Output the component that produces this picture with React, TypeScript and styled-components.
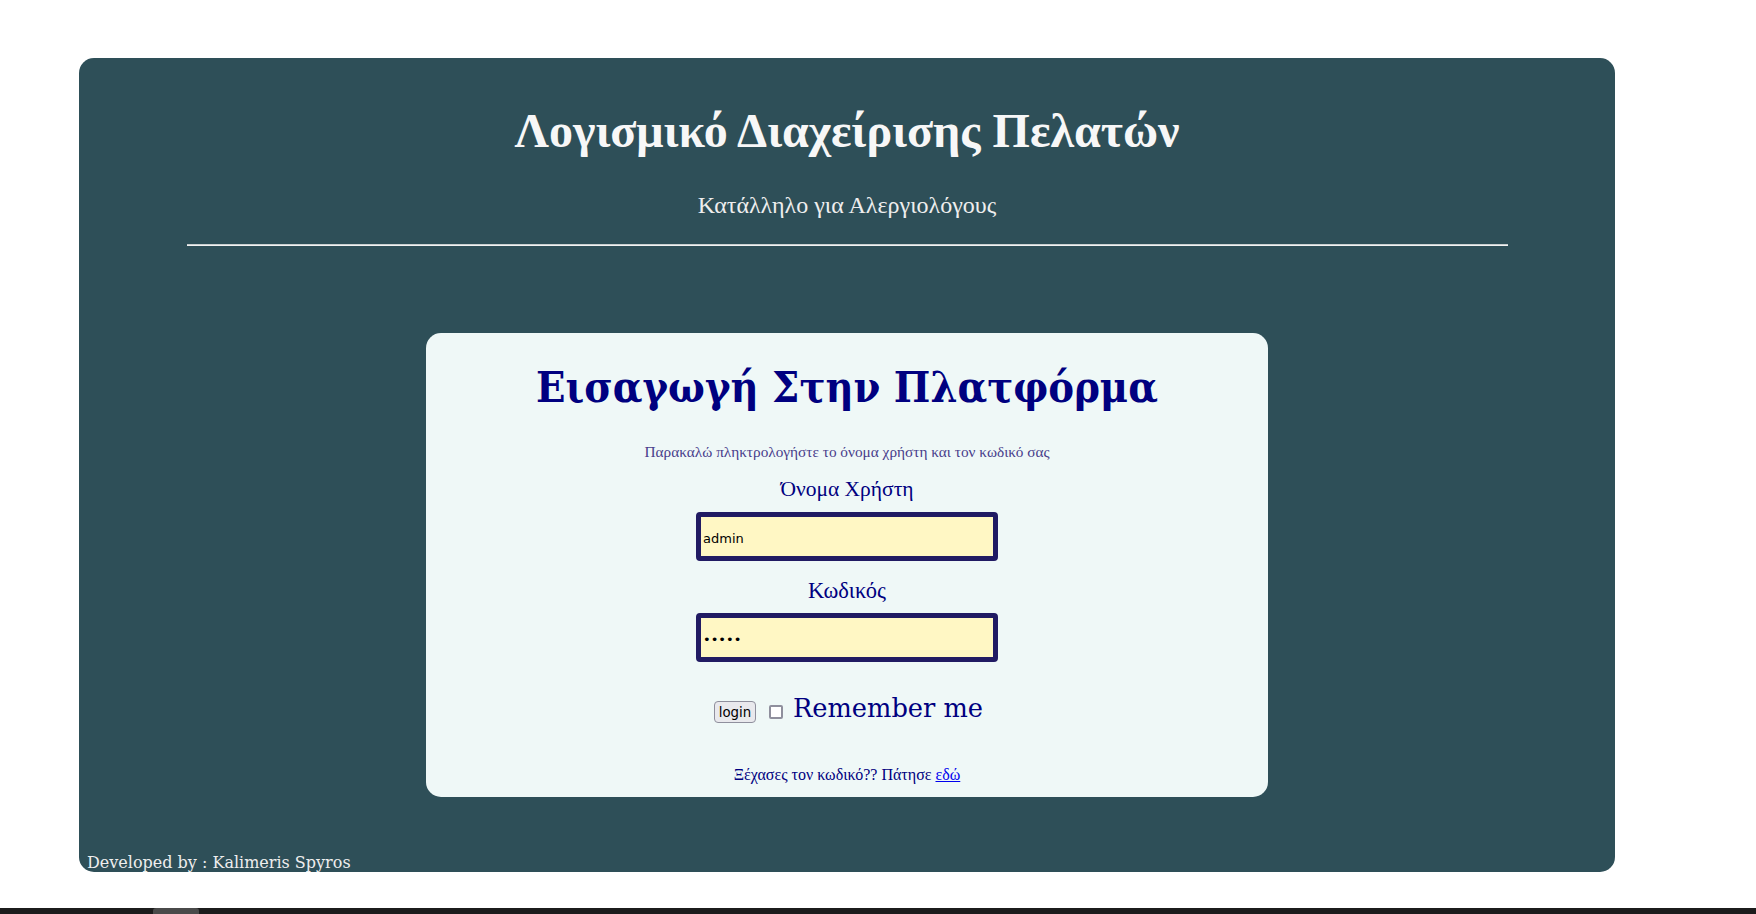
import React from "react";
import styled, { createGlobalStyle } from "styled-components";

const Global = createGlobalStyle`
  html, body { margin: 0; padding: 0; background: #ffffff; }
  body { font-family: "DejaVu Serif", serif; }
`;

const Page = styled.div`
  padding: 58px 0 0 79px;
  height: 914px;
  box-sizing: border-box;
`;

const Panel = styled.div`
  width: 1536px;
  height: 814px;
  box-sizing: border-box;
  background: #2e4f58;
  border-radius: 15px;
  padding-top: 45px;
  display: flex;
  flex-direction: column;
`;

const Header = styled.header`
  display: flex;
  flex-direction: column;
  align-items: center;
`;

const Title = styled.h1`
  margin: 0;
  font-family: "Liberation Serif", serif;
  font-weight: bold;
  font-size: 48px;
  line-height: 56px;
  color: #f7f7f7;
`;

const Subtitle = styled.p`
  margin: 32px 0 0;
  font-family: "Liberation Serif", serif;
  font-size: 24px;
  line-height: 28px;
  color: #eeeeee;
`;

const Rule = styled.hr`
  width: 1321px;
  margin: 25px 0 0 108px;
  height: 0;
  border: none;
  border-top: 1px solid #c9cfd0;
  border-bottom: 1px solid #f2f2f2;
`;

const Card = styled.section`
  margin: 87px 0 0 347px;
  width: 842px;
  height: 464px;
  box-sizing: border-box;
  background: #eff8f7;
  border-radius: 15px;
  padding-top: 29px;
  display: flex;
  flex-direction: column;
  align-items: center;
`;

const CardTitle = styled.h2`
  margin: 0;
  font-family: "DejaVu Serif Condensed", "DejaVu Serif", serif;
  font-stretch: condensed;
  font-weight: bold;
  font-size: 43px;
  line-height: 51px;
  color: #000080;
`;

const Hint = styled.p`
  margin: 30px 0 0;
  font-family: "Liberation Serif", serif;
  font-size: 15.3px;
  line-height: 18px;
  color: #483d8b;
`;

const Label = styled.label<{ $gap: number; $size: number }>`
  display: block;
  margin-top: ${(p) => p.$gap}px;
  font-family: "Liberation Serif", serif;
  font-size: ${(p) => p.$size}px;
  line-height: ${(p) => Math.round(p.$size * 1.16)}px;
  color: #000080;
`;

const Field = styled.input<{ $gap: number }>`
  margin-top: ${(p) => p.$gap}px;
  width: 302px;
  height: 49px;
  box-sizing: border-box;
  border: 5px solid #211b63;
  border-radius: 4px;
  background: #fff7c4;
  padding: 3px 2px 0;
  font-family: "DejaVu Sans", sans-serif;
  font-size: 13px;
  color: #000;
  outline: none;
`;

const Row = styled.div`
  margin-top: 31px;
  padding-left: 3px;
  display: flex;
  align-items: flex-start;
`;

const LoginButton = styled.button`
  margin-top: 8px;
  width: 42px;
  height: 22px;
  box-sizing: border-box;
  padding: 0;
  border: 1px solid #8f8f9d;
  border-radius: 4px;
  background: #e9e9ed;
  font-family: "DejaVu Sans", sans-serif;
  font-size: 13.33px;
  color: #000;
`;

const Check = styled.input`
  appearance: none;
  margin: 12px 0 0 13px;
  width: 14px;
  height: 14px;
  box-sizing: border-box;
  border: 2px solid #8f8f9d;
  border-radius: 2px;
  background: #ffffff;
`;

const Remember = styled.span`
  margin-left: 10px;
  font-family: "DejaVu Serif", serif;
  font-size: 25.7px;
  line-height: 30px;
  color: #000080;
`;

const Forgot = styled.p`
  margin: 42px 0 0;
  font-family: "Liberation Serif", serif;
  font-size: 16px;
  line-height: 19px;
  color: #000080;
`;

const Link = styled.a`
  color: #0000ee;
  text-decoration: underline;
`;

const Footer = styled.footer`
  margin-top: auto;
  padding-left: 8px;
  font-family: "DejaVu Serif", serif;
  font-size: 16px;
  line-height: 19px;
  color: #eeeeee;
`;

const ScrollTrack = styled.div`
  position: fixed;
  left: 0;
  right: 0;
  bottom: 0;
  height: 6px;
  background: #1c1c1c;
`;

const ScrollThumb = styled.div`
  margin-left: 153px;
  width: 46px;
  height: 6px;
  border-radius: 3px 3px 0 0;
  background: #4a4a4a;
`;

export default function App() {
  return (
    <>
      <Global />
      <Page>
        <Panel>
          <Header>
            <Title>Λογισμικό Διαχείρισης Πελατών</Title>
            <Subtitle>Κατάλληλο για Αλεργιολόγους</Subtitle>
          </Header>
          <Rule />
          <Card>
            <CardTitle>Εισαγωγή Στην Πλατφόρμα</CardTitle>
            <Hint>Παρακαλώ πληκτρολογήστε το όνομα χρήστη και τον κωδικό σας</Hint>
            <Label $gap={16} $size={21.5}>Όνομα Χρήστη</Label>
            <Field $gap={10} type="text" defaultValue="admin" readOnly />
            <Label $gap={17} $size={22.5}>Κωδικός</Label>
            <Field $gap={9} type="password" defaultValue="admin" readOnly />
            <Row>
              <LoginButton type="button">login</LoginButton>
              <Check type="checkbox" />
              <Remember>Remember me</Remember>
            </Row>
            <Forgot>
              Ξέχασες τον κωδικό?? Πάτησε <Link href="#">εδώ</Link>
            </Forgot>
          </Card>
          <Footer>Developed by : Kalimeris Spyros</Footer>
        </Panel>
      </Page>
      <ScrollTrack>
        <ScrollThumb />
      </ScrollTrack>
    </>
  );
}
